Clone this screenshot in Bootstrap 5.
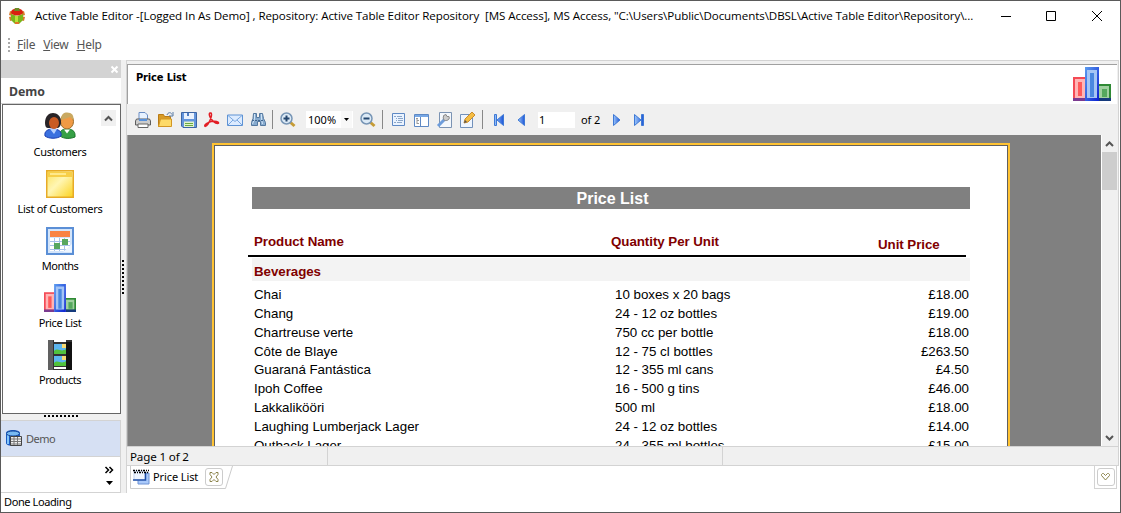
<!DOCTYPE html>
<html lang="en">
<head>
<meta charset="utf-8">
<title>Active Table Editor</title>
<link href="https://cdn.jsdelivr.net/npm/bootstrap@5.3.0/dist/css/bootstrap.min.css" rel="stylesheet">
<script src="https://cdn.jsdelivr.net/npm/bootstrap@5.3.0/dist/js/bootstrap.bundle.min.js"></script>
<style>
body{font-family:"Noto Sans",sans-serif;font-size:11px;line-height:14px;color:#000;background:#fff}
svg{display:block;flex:none}
.win{width:1121px;height:513px;border:1px solid #5a5a5a}
.titlebar{height:29px;padding-left:7px}
.titletext{font:11.6px/16px "Open Sans",sans-serif;margin-left:5px;margin-left:9px;width:945px;white-space:pre;letter-spacing:-.093px}
.menurow{height:30px;padding-left:7px;font-size:12px;letter-spacing:-.25px;color:#555}
.side{width:120px}
.side-head{height:18px;background:#d3d3d3;padding-right:2px}
.side-title{height:26px;padding:2px 0 0 8px;font:bold 12.3px/16px "Noto Sans",sans-serif;color:#444;border-bottom:1px solid #d3d3d3}
.navbox{height:310px;width:119px;margin-left:1px;border:1px solid #666}
.navitem{height:57px;padding:7px 3px 0 0;letter-spacing:-.35px}
.navitem svg{height:30px;margin-bottom:3px}
.scrollup{right:4px;top:5px;width:15px;height:16px;background:#f0f0f0}
.grip{height:6px;background:#f0f0f0}
.group{height:37px;background:#d6e0f3;border:1px solid #d3d3d3;border-left:0;color:#555;padding-left:5px;letter-spacing:-.5px}
.side-more{height:36px;border:1px solid #d3d3d3;border-top:0;border-left:0;padding:8px 5px 0 0}
.splitter{width:6px;height:433px;background:#f0f0f0;border-right:1px solid #d3d3d3}
.mainpane{height:406px;width:992px;border-top:1px solid #d3d3d3;border-right:1px solid #d3d3d3;background:#f0f0f0;padding-top:3px}
.doc-head{height:40px;margin-right:1px;border-top:1px solid #a0a0a0;border-left:1px solid #a0a0a0;background:#fff;padding:2px 6px 0 8px}
.doc-head b{font:bold 11px/14px "DejaVu Sans Condensed","DejaVu Sans",sans-serif;margin-top:4px;letter-spacing:-.15px}
.tools{height:31px;padding-left:8px;gap:7px}
.sep{width:1px;height:19px;background:#888}
.viewer{height:311px;border-left:1px solid #a0a0a0}
.canvas{width:973px;height:311px;background:#808080;padding:8px 0 0 84px}
.paper{width:798px;height:400px;background:#fff;border:2px solid #ffc333;box-shadow:inset 0 0 0 1px #606060;font:13.33px/19px "Liberation Sans",Arial,sans-serif;letter-spacing:-.01px;padding:42px 0 0 34px}
.rtitle{width:718px;margin-left:4px;height:22px;background:#808080;color:#fff;font-weight:bold;font-size:16px;line-height:24px;text-align:center;letter-spacing:0;padding-left:3px}
.rhead{height:48px;width:718px;border-bottom:2px solid #000;color:#800000;font-weight:bold;padding:23px 0 0 6px;letter-spacing:-.05px}
.c1{width:357px}.c2{width:267px}
.rgroup{width:718px;margin:1px 0 4px 4px;height:23px;background:#f3f3f3;color:#800000;font-weight:bold;line-height:27px;padding-left:2px;letter-spacing:-.05px}
.rrow{height:18.85px;width:715px;margin-left:6px;line-height:19px}
.r1{width:361px}
.vscroll{width:16px;height:311px;background:#f0f0f0;border-left:1px solid #fff}
.thumb{height:38px;background:#cdcdcd}
.statusrow{height:20px;border-top:1px solid #d3d3d3;border-bottom:1px solid #d3d3d3;background:#f0f0f0;font-size:11.6px;letter-spacing:-.15px;line-height:19px}
.s1{width:201px;padding-left:3px;border-right:1px solid #d3d3d3}
.s2{width:395px;border-right:1px solid #d3d3d3}
.tabshape{left:3px;top:0}
.tabtext{padding:0 0 0 6px;height:22px;letter-spacing:-.1px}
.tabmenu{width:23px;height:23px;border:1px solid #d3d3d3;border-top:0;margin-right:3px}
.xbtn{width:18px;height:18px;border:1px solid #ccc;border-radius:3px}
</style>
</head>
<body class="overflow-hidden">
<svg width="0" height="0" class="position-absolute">
<defs>
<linearGradient id="by" x1="0" y1="0" x2="1" y2="1"><stop stop-color="#fbe35c"/><stop offset=".45" stop-color="#fff6b4"/><stop offset="1" stop-color="#fbd21c"/></linearGradient>
<linearGradient id="bb" x1="0" y1="0" x2="1" y2="1"><stop stop-color="#5c9df0"/><stop offset="1" stop-color="#0a1fd0"/></linearGradient>
<linearGradient id="nv" x1="0" y1="0" x2="1" y2="0"><stop stop-color="#9cc6fa"/><stop offset="1" stop-color="#1c55d8"/></linearGradient>
<symbol id="chart" viewBox="0 0 38 34" preserveAspectRatio="none">
<path fill="#f44a55" d="M0 10h12v24H0z"/><path fill="#ffb5b5" d="M2 12h10v19H2z"/><path fill="#ff5a5a" d="M5 15h4v14H5z"/><path fill="#7b3a90" d="M0 31h12v3H0z"/>
<path fill="#2f8a35" d="M26 17h12v17H26z"/><path fill="#a0d0a0" d="M26 19h10v12H26z"/><path fill="#55a85e" d="M29 22h5v8h-5z"/><path fill="#153a7c" d="M26 31h12v3H26z"/>
<path fill="url(#bb)" d="M12 0h14v34H12z"/><path fill="#a5c5f5" d="M14 3h10v28H14z"/><path fill="#4a88e0" d="M17 6h4v24h-4z"/>
</symbol>
</defs>
</svg>
<div class="win d-flex flex-column">
  <header class="titlebar d-flex align-items-center">
    <svg width="18" height="18" viewBox="0 0 18 18"><path d="M2 4l3 1-1 4-3-1zM16 4l-3 1 1 4 3-1zM1 10l4-1v4l-3 1zM17 10l-4-1v4l3 1z" fill="#d8792a"/><path d="M3 7l6 2 6-2v6l-4 4H7l-4-4z" fill="#79b51b"/><path d="M7 9h3v8H7z" fill="#b8e03a"/><ellipse cx="9" cy="5" rx="6" ry="3.6" fill="#d8200f"/><path d="M7 1h4l1 3H6z" fill="#6b8b25"/><path d="M7 15h4v2H7z" fill="#e07628"/></svg>
    <div class="titletext">Active Table Editor -[Logged In As Demo] , Repository: Active Table Editor Repository  [MS Access], MS Access, "C:\Users\Public\Documents\DBSL\Active Table Editor\Repository\...</div>
    <svg width="112" height="18" viewBox="0 0 112 18" class="ms-auto" style="margin-right:17px" fill="none" stroke="#000"><path d="M10 9.500h10M55.500 4.500h9v9h-9zM101 4l10 10M111 4l-10 10"/></svg>
  </header>
  <nav class="menurow d-flex align-items-center">
    <svg width="3" height="16" style="margin-right:6px"><path d="M1 1v14" stroke="#aaa" stroke-width="2" stroke-dasharray="2 2"/></svg>
    <span class="me-2"><u>F</u>ile</span><span class="me-2"><u>V</u>iew</span><span><u>H</u>elp</span>
  </nav>
  <div class="d-flex">
    <aside class="side">
      <div class="side-head d-flex align-items-center justify-content-end"><svg width="9" height="9" viewBox="0 0 9 9"><path d="M1.500 1.500l6 6M7.500 1.500l-6 6" stroke="#fff" stroke-width="2"/></svg></div>
      <div class="side-title d-flex align-items-center">Demo</div>
      <div class="navbox position-relative">
        <div class="scrollup position-absolute d-flex align-items-center justify-content-center"><svg width="9" height="7" viewBox="0 0 9 7"><path d="M1 5.500L4.500 2 8 5.500" fill="none" stroke="#555" stroke-width="2"/></svg></div>
        <div class="navitem d-flex flex-column align-items-center"><svg width="32" height="30" viewBox="0 0 32 30"><path d="M16 24c-1-5 2-7 7-7s8 2 8 6v2c-5 2-11 2-15-1z" fill="#36a045" stroke="#187528"/><ellipse cx="23" cy="9.500" rx="6.500" ry="7.500" fill="#f09a45" stroke="#9b6b28"/><path d="M17 8c0-6 3-7.500 6-7.500 5 0 7 3 6.500 7.500L26 5z" fill="#c9a961"/><path d="M20 17.500l3 4 3-4" fill="#fff"/><path d="M1 24c-1-5 3-7 8-7s9 2 8 7c-4 3-12 3-16 0z" fill="#3a70df" stroke="#183bb0"/><path d="M1 11c0-7 4-10 8-10s8 3 8 9c0 4-2 6-4 6H4c-2 0-3-2-3-5z" fill="#292427"/><ellipse cx="10" cy="11" rx="5" ry="6" fill="#c95b25"/><path d="M6 17l4 5 3-5" fill="#b8d1ff"/></svg><span>Customers</span></div>
        <div class="navitem d-flex flex-column align-items-center"><svg width="28" height="30" viewBox="0 0 28 30"><path d="M.75 1.750h26.500v26.500H.75z" fill="url(#by)" stroke="#e7ab27" stroke-width="1.500"/><path d="M2 3h24v5H2z" fill="#f7cf48"/><path d="M4 5h16" stroke="#ffe98b" stroke-width="2"/></svg><span style="letter-spacing:-.3px">List of Customers</span></div>
        <div class="navitem d-flex flex-column align-items-center"><svg width="28" height="30" viewBox="0 0 28 30"><path d="M1 2h26v26H1z" fill="#d4e5fa" stroke="#5b8fd6" stroke-width="2"/><path d="M4 5h20v6H4z" fill="#f98343"/><path d="M4 12h20v13H4z" fill="#fff"/><path d="M4 15.500h20M4 19.500h20M4 23.500h20M8.500 12v13M13.500 12v13M18.500 12v13" stroke="#a8c2e9"/><path d="M16 13h6v6h-6zM8 17h6v6H8z" fill="#58a75f"/><path d="M17 26l9-8v8z" fill="#edf5ff"/></svg><span style="letter-spacing:-.5px">Months</span></div>
        <div class="navitem d-flex flex-column align-items-center"><svg width="32" height="30"><use href="#chart" x="0" y="1" width="32" height="28"/></svg><span>Price List</span></div>
        <div class="navitem d-flex flex-column align-items-center"><svg width="24" height="30" viewBox="0 0 24 30"><path d="M0 0h24v30H0z" fill="#333"/><path d="M0 0h5v30H0z" fill="#606060"/><path d="M18 2h6v28h-6z" fill="#111"/><path d="M6 4h12v10H6zM6 16h12v10H6z" fill="#5cb5ee"/><path d="M6 11c4-4 7 2 12-2v5H6zM6 23c4-4 7 2 12-2v5H6z" fill="#51c23c"/><path d="M14 4h4v4h-4zM14 16h4v4h-4z" fill="#f7db72"/><path d="M6 1h12M6 28h12" stroke="#fff" stroke-width="2"/></svg><span style="letter-spacing:-.45px">Products</span></div>
      </div>
      <div class="grip d-flex justify-content-center"><svg width="35" height="4"><path d="M0 2h35" stroke="#000" stroke-width="2" stroke-dasharray="2 2"/></svg></div>
      <div class="group d-flex align-items-center"><svg width="16" height="17" viewBox="0 0 16 17"><path d="M0 3c0-4 14-4 14 0v10c0 4-14 4-14 0z" fill="#1a5ac0"/><path d="M2 4v10" stroke="#83c5fa" stroke-width="2"/><ellipse cx="7" cy="3.500" rx="6.500" ry="2.500" fill="#77baf2" stroke="#174a9d"/><path d="M4.500 6.500h11v9h-11z" fill="#eee" stroke="#444"/><path d="M5 9h10M5 11.500h10M5 14h10M8 7v8M11.500 7v8" stroke="#777"/></svg><span class="ms-1">Demo</span></div>
      <div class="side-more d-flex justify-content-end"><svg width="11" height="25" viewBox="0 0 11 25"><path d="M1.500 2l3 3-3 3M5.500 2l3 3-3 3" fill="none" stroke="#000" stroke-width="1.500"/><path d="M2 16h7l-3.500 4z"/></svg></div>
    </aside>
    <div class="splitter d-flex align-items-center"><svg width="5" height="36"><path d="M2 1v35" stroke="#000" stroke-width="2" stroke-dasharray="2 2"/></svg></div>
    <main class="flex-grow-1">
      <div class="mainpane">
        <div class="doc-head d-flex justify-content-between"><b>Price List</b><svg width="38" height="34"><use href="#chart" width="38" height="34"/></svg></div>
        <div class="tools d-flex align-items-center">
          <svg width="16" height="16" viewBox="0 0 16 16"><path d="M4 8V.5h6L12.500 3v5" fill="#e8f2ff" stroke="#6a8dc4"/><path d="M1.500 7h13l1 2v4H.5V9z" fill="#ccc" stroke="#5d5d5d"/><path d="M3 12h10v3.500H3z" fill="#fff" stroke="#666"/><path d="M4 8h8" stroke="#5892dc" stroke-width="2"/></svg>
          <svg width="16" height="16" viewBox="0 0 16 16"><path d="M.5 14.500v-12h5l1 2h6v10z" fill="#d89b26" stroke="#b97b16"/><path d="M.5 14.500L2.500 7h11v7.500z" fill="#fdda68" stroke="#d29624"/><path d="M9 3c1-3 4-3 5-.5M15 0v4h-4" fill="none" stroke="#597ba5"/></svg>
          <svg width="16" height="16" viewBox="0 0 16 16"><path d="M.5.5h15v15H2l-1.500-1.500z" fill="#6495dc" stroke="#3d65a4"/><path d="M3 1h10v6H3z" fill="#eaf2fd"/><path d="M6 1h2v3H6z" fill="#4f7bc1"/><path d="M3 9.500h10V15H3z" fill="#e3f3ce"/><path d="M4 11.500h8M4 13.500h8" stroke="#6aa943"/></svg>
          <svg width="16" height="16" viewBox="0 0 16 16" fill="none" stroke="#e21e25" stroke-width="1.500"><path d="M6 1c3-1 1 7-2 11-2 3-4 3-3 1 2-3 10-5 13-3 2 2-2 2-4 0C7 8 4 2 6 1z"/></svg>
          <svg width="16" height="16" viewBox="0 0 16 16"><path d="M.5 3h15v10.500H.5z" fill="#dcebff" stroke="#5e93d4"/><path d="M1 3.500l7 6 7-6M1 13l5-5M15 13l-5-5" fill="none" stroke="#79a7df"/></svg>
          <svg width="16" height="16" viewBox="0 0 16 16"><path d="M3.500 1.500h3v4h3v-4h3l1 5 2 4v3h-5v-4h-3v4h-6v-3l1.500-4z" fill="#86aace" stroke="#54789f"/><path d="M4.500 2v5l-2 5M11.500 2v5l1 5" stroke="#d0e4f7" fill="none"/><path d="M2 8.500h12" stroke="#41668f" stroke-dasharray="2 1"/></svg>
          <div class="sep" style="margin-left:-1px"></div>
          <svg width="16" height="16" viewBox="0 0 16 16"><path d="M10 10l4.500 4" stroke="#c69c35" stroke-width="3"/><circle cx="6.500" cy="6.500" r="5.500" fill="#dceaf6" stroke="#7795b5" stroke-width="1.500"/><path d="M3.500 6.500h6M6.500 3.500v6" stroke="#24466e" stroke-width="2"/></svg>
          <div class="bg-white d-flex align-items-center" style="width:47px;height:17px;margin-left:3px"><span style="padding-left:2px;width:35px">100%</span><span class="d-flex align-items-center justify-content-center h-100" style="width:11px;background:#f8f8f8"><svg width="5" height="3"><path d="M0 0h5L2.500 3z"/></svg></span></div>
          <svg width="16" height="16" viewBox="0 0 16 16"><path d="M10 10l4.500 4" stroke="#c69c35" stroke-width="3"/><circle cx="6.500" cy="6.500" r="5.500" fill="#dceaf6" stroke="#7795b5" stroke-width="1.500"/><path d="M3.500 6.500h6" stroke="#24466e" stroke-width="2"/></svg>
          <div class="sep" style="margin-left:-1px"></div>
          <svg width="16" height="16" viewBox="0 0 16 16"><path d="M2.500 1.500h12v12h-12z" fill="#eaf3ff" stroke="#5e89c4"/><path d="M4 4.500h2M7 4.500h5M6 6.500h1M8 6.500h5M6 8.500h1M8 8.500h5M4 10.500h2M7 10.500h5" stroke="#8ba6c8"/></svg>
          <svg width="16" height="16" viewBox="0 0 16 16"><path d="M1.500 2.500h14v12h-14z" fill="#fff" stroke="#5e89c4"/><path d="M2 3h13v2H2z" fill="#77a7e5"/><path d="M7.500 5v9" stroke="#5e89c4"/><path d="M3 6.500h2M4 7v5M4 8.500h2M4 11.500h2" stroke="#999"/></svg>
          <svg width="16" height="16" viewBox="0 0 16 16"><path d="M3.500.5h12v15h-12z" fill="#f3f7fc" stroke="#7b93b3"/><path d="M2 14l7-7" stroke="#6d9cdb" stroke-width="3"/><path d="M13 4.500a3 3 0 1 1-3-2l1 2z" fill="#ccc" stroke="#888"/></svg>
          <svg width="17" height="16" viewBox="0 0 17 16"><path d="M1.500 2.500h12v13h-12z" fill="#eef5ff" stroke="#7291ba"/><path d="M5 11l1-4 7-7 3 3-7 7z" fill="#f5bd42" stroke="#c98b2e"/><path d="M5 11l1-3 2 2z" fill="#555"/></svg>
          <div class="sep" style="margin-left:-1px"></div>
          <svg width="16" height="16" viewBox="0 0 16 16" fill="url(#nv)" stroke="#3e79d5"><path d="M4.500 2.500h2v11h-2zM13.500 2.500v11L7 8z"/></svg>
          <svg width="16" height="16" viewBox="0 0 16 16" fill="url(#nv)" stroke="#3e79d5"><path d="M11.500 2.500v11L5 8z"/></svg>
          <div class="bg-white" style="width:37px;height:16px;margin-left:2px;padding-left:1px;line-height:15px">1</div>
          <span style="width:19px;white-space:nowrap;letter-spacing:-.1px;margin-left:-1px;margin-right:1px">of 2</span>
          <svg width="16" height="16" viewBox="0 0 16 16" fill="url(#nv)" stroke="#3e79d5"><path d="M5.500 2.500v11L12 8z"/></svg>
          <svg width="16" height="16" viewBox="0 0 16 16" fill="url(#nv)" stroke="#3e79d5"><path d="M10.500 2.500h2v11h-2zM3.500 2.500v11L10 8z"/></svg>
        </div>
        <div class="viewer d-flex">
          <div class="canvas overflow-hidden">
            <div class="paper">
              <div class="rtitle">Price List</div>
              <div class="rhead d-flex"><span class="c1">Product Name</span><span class="c2">Quantity Per Unit</span><span style="padding-top:3px">Unit Price</span></div>
              <div class="rgroup">Beverages</div>
              <div class="rrow d-flex"><span class="r1">Chai</span><span>10 boxes x 20 bags</span><span class="ms-auto">£18.00</span></div>
              <div class="rrow d-flex"><span class="r1">Chang</span><span>24 - 12 oz bottles</span><span class="ms-auto">£19.00</span></div>
              <div class="rrow d-flex"><span class="r1">Chartreuse verte</span><span>750 cc per bottle</span><span class="ms-auto">£18.00</span></div>
              <div class="rrow d-flex"><span class="r1">Côte de Blaye</span><span>12 - 75 cl bottles</span><span class="ms-auto">£263.50</span></div>
              <div class="rrow d-flex"><span class="r1">Guaraná Fantástica</span><span>12 - 355 ml cans</span><span class="ms-auto">£4.50</span></div>
              <div class="rrow d-flex"><span class="r1">Ipoh Coffee</span><span>16 - 500 g tins</span><span class="ms-auto">£46.00</span></div>
              <div class="rrow d-flex"><span class="r1">Lakkalikööri</span><span>500 ml</span><span class="ms-auto">£18.00</span></div>
              <div class="rrow d-flex"><span class="r1">Laughing Lumberjack Lager</span><span>24 - 12 oz bottles</span><span class="ms-auto">£14.00</span></div>
              <div class="rrow d-flex"><span class="r1">Outback Lager</span><span>24 - 355 ml bottles</span><span class="ms-auto">£15.00</span></div>
            </div>
          </div>
          <div class="vscroll d-flex flex-column">
            <svg width="15" height="17"><path d="M4 11l3.500-3.500L11 11" fill="none" stroke="#555" stroke-width="2"/></svg>
            <div class="thumb"></div>
            <svg width="15" height="17" class="mt-auto"><path d="M4 7l3.500 3.500L11 7" fill="none" stroke="#555" stroke-width="2"/></svg>
          </div>
        </div>
        <div class="statusrow d-flex"><div class="s1">Page 1 of 2</div><div class="s2"></div></div>
      </div>
      <div class="d-flex position-relative">
        <svg class="tabshape position-absolute" width="104" height="23"><path d="M.5 0v22.500h95L102.500 0" fill="none" stroke="#ccc"/></svg>
        <div class="tabtext d-flex align-items-center">
          <svg width="17" height="16" viewBox="0 0 17 16"><path d="M5 4h11v11H5z" fill="#a9c9fa" stroke="#6d92d5"/><path d="M1 2h11v9H1z" fill="#eef5ff" stroke="#c3d5f1"/><path d="M0 11h12.500V4" fill="none" stroke="#1f4fa8" stroke-width="1.500"/><path d="M0 1.500h16M1 3.500h15" stroke="#000" stroke-width="1.500" stroke-dasharray="2 1 1 1"/></svg>
          <span style="margin:0 7px 0 3px">Price List</span>
          <span class="xbtn d-flex align-items-center justify-content-center"><svg width="10" height="10" viewBox="0 0 10 10"><path d="M1 .5h2l2 2 2-2h2v2L7 5l2 2.500v2H7l-2-2-2 2H1v-2L3 5 1 2.500z" fill="none" stroke="#8b834b"/></svg></span>
        </div>
        <div class="tabmenu ms-auto d-flex align-items-center justify-content-center"><span class="xbtn d-flex align-items-center justify-content-center"><svg width="9" height="8" viewBox="0 0 9 8"><path d="M.5 1.500l1-1h1l2 2 2-2h1l1 1v1l-4 4.500-4-4.500z" fill="none" stroke="#8b834b"/></svg></span></div>
      </div>
    </main>
  </div>
  <footer style="padding:2px 0 0 3px;letter-spacing:-.4px">Done Loading</footer>
</div>
</body>
</html>
